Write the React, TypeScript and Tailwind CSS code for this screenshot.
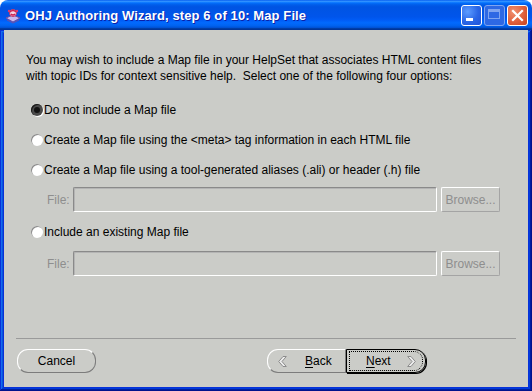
import React from "react";

const font = "font-['Liberation_Sans',Arial,sans-serif]";

function Radio({ checked }: { checked?: boolean }) {
  return checked ? (
    <span className="relative w-[12px] h-[12px] rounded-full bg-[#4a4a4a] shadow-[inset_1px_1px_0_#1a1a1a,1px_1px_0_#ffffff] shrink-0 flex items-center justify-center">
      <span className="w-[6px] h-[6px] rounded-full bg-[#111111]" />
    </span>
  ) : (
    <span className="w-[12px] h-[12px] rounded-full bg-white shadow-[inset_1px_1px_0_#8a8a8a] shrink-0" />
  );
}

function Chevron({ dir }: { dir: "left" | "right" }) {
  return (
    <svg width="9" height="11" viewBox="0 0 9 11">
      <path
        d={
          dir === "left"
            ? "M5 0.5 L0.7 5.5 L5 10.5 L8.3 10.5 L4 5.5 L8.3 0.5 Z"
            : "M4 0.5 L8.3 5.5 L4 10.5 L0.7 10.5 L5 5.5 L0.7 0.5 Z"
        }
        fill="#ececec"
        stroke="#8c8c8c"
        strokeWidth="1"
        strokeLinejoin="round"
      />
    </svg>
  );
}

function AppIcon() {
  return (
    <svg width="16" height="16" viewBox="0 0 16 16">
      <path d="M1 10 L8 7 L15 10 L8 14 Z" fill="#c9b8ee" stroke="#6a4fa8" strokeWidth="1" />
      <path d="M2 12 L8 15 L14 12" fill="none" stroke="#6a4fa8" strokeWidth="1" />
      <circle cx="8" cy="5" r="3.5" fill="#f4d4e4" stroke="#c03060" strokeWidth="1" />
      <path d="M5 4 Q8 1 11 4 M6 6 Q8 8 10 6" fill="none" stroke="#d02050" strokeWidth="1.2" />
      <circle cx="4" cy="3" r="1.2" fill="#e03a6a" />
      <circle cx="12" cy="3" r="1.2" fill="#e03a6a" />
    </svg>
  );
}

function FileRow() {
  return (
    <div className="flex items-center h-[25px] pl-[31px]">
      <span className="text-[12px] text-[#8e8e8e] w-[26px] leading-none">File:</span>
      <div className="w-[364px] h-[25px] rounded-[2px] border border-t-[#8a8a8a] border-l-[#8a8a8a] border-r-white border-b-white shadow-[inset_1px_1px_0_#b4b4b4]" />
      <div className="ml-[4px] w-[59px] h-[25px] rounded-[2px] border border-t-white border-l-white border-r-[#a4a4a4] border-b-[#a4a4a4] flex items-center justify-center text-[12px] text-[#8e8e8e]">
        Browse...
      </div>
    </div>
  );
}

export default function App() {
  return (
    <div className={`w-[532px] h-[391px] flex flex-col rounded-t-[8px] overflow-hidden ${font}`}>
      {/* Title bar */}
      <div className="h-[30px] shrink-0 flex items-center bg-[linear-gradient(180deg,#0058ee_0%,#3593ff_4%,#288eff_6%,#127dff_8%,#036ffc_10%,#0262ee_14%,#0057e5_20%,#0054e3_24%,#0055eb_56%,#005bf5_66%,#026afe_76%,#0062ef_86%,#0052d6_92%,#0040ab_94%,#003092_100%)]">
        <div className="ml-[5px] mt-[1px] w-[16px] h-[16px]">
          <AppIcon />
        </div>
        <span className="ml-[4px] text-white font-bold text-[13px] leading-none tracking-[0.1px] [text-shadow:1px_1px_0_#0a1fa8]">
          OHJ Authoring Wizard, step 6 of 10: Map File
        </span>
        <div className="ml-auto mr-[4px] flex gap-[2px] items-center">
          <div className="relative w-[21px] h-[21px] rounded-[3px] border border-white bg-[radial-gradient(circle_at_30%_30%,#5c9cff_0%,#2a66e6_55%,#1f52d8_100%)]">
            <div className="absolute left-[4px] top-[12px] w-[7px] h-[3px] bg-white" />
          </div>
          <div className="relative w-[21px] h-[21px] rounded-[3px] border border-[#7fa4f0] bg-[#2e68e4]">
            <div className="absolute left-[3px] top-[3px] w-[12px] h-[10px] border border-t-[3px] border-[#7fa4f0]" />
          </div>
          <div className="relative w-[21px] h-[21px] rounded-[3px] border border-white bg-[radial-gradient(circle_at_30%_30%,#f09070_0%,#e0603c_55%,#c8441e_100%)]">
            <svg className="absolute left-[3px] top-[3px]" width="13" height="13" viewBox="0 0 13 13">
              <path d="M2 2 L11 11 M11 2 L2 11" stroke="white" strokeWidth="2.2" strokeLinecap="square" />
            </svg>
          </div>
        </div>
      </div>

      {/* Frame */}
      <div className="flex-1 flex flex-col px-[4px] pb-[4px] bg-[#0831d9] shadow-[inset_-1px_-1px_#00138c,inset_1px_1px_#0831d9,inset_-2px_-2px_#001ea0,inset_2px_2px_#166aee,inset_-3px_-3px_#003bda,inset_3px_3px_#0855dd]">
        <div className="flex-1 flex flex-col bg-[#cbccc8] px-[12px] text-black text-[12px]">
          {/* Form */}
          <div className="flex-1 flex flex-col">
            <p className="pl-[10px] pt-[22px] leading-[16px]">
              You may wish to include a Map file in your HelpSet that associates HTML content files
              <br />
              with topic IDs for context sensitive help.&nbsp; Select one of the following four options:
            </p>
            <div className="mt-[14px] flex items-center h-[24px] pl-[15px] gap-[1px]">
              <Radio checked />
              <span>Do not include a Map file</span>
            </div>
            <div className="mt-[6px] flex items-center h-[24px] pl-[15px] gap-[1px]">
              <Radio />
              <span>Create a Map file using the &lt;meta&gt; tag information in each HTML file</span>
            </div>
            <div className="mt-[6px] flex items-center h-[24px] pl-[15px] gap-[1px]">
              <Radio />
              <span>Create a Map file using a tool-generated aliases (.ali) or header (.h) file</span>
            </div>
            <div className="mt-[5px]">
              <FileRow />
            </div>
            <div className="mt-[8px] flex items-center h-[24px] pl-[15px] gap-[1px]">
              <Radio />
              <span>Include an existing Map file</span>
            </div>
            <div className="mt-[7px]">
              <FileRow />
            </div>
          </div>

          {/* Footer */}
          <div className="h-[1px] bg-[#9a9a9a]" />
          <div className="mt-[10px] mb-[14px] h-[24px] flex items-center">
            <div className="ml-[1px] w-[79px] h-[24px] rounded-[11px] border border-t-white border-l-white border-r-[#7c7c7c] border-b-[#7c7c7c] flex items-center justify-center">
              Cancel
            </div>
            <div className="ml-[171px] w-[79px] h-[24px] rounded-l-[11px] border border-t-white border-l-white border-r-[#7c7c7c] border-b-[#7c7c7c] flex items-center pl-[10px]">
              <Chevron dir="left" />
              <span className="ml-[18px]">
                <span className="underline underline-offset-[2px]">B</span>ack
              </span>
            </div>
            <div className="w-[80px] h-[24px] rounded-r-[11px] border border-black shadow-[1px_1px_0_#000] flex items-center">
              <div className="mx-[2px] flex-1 h-[20px] rounded-r-[9px] border border-dotted border-black flex items-center pl-[16px]">
                <span>
                  <span className="underline underline-offset-[2px]">N</span>ext
                </span>
                <span className="ml-[16px]">
                  <Chevron dir="right" />
                </span>
              </div>
            </div>
          </div>
        </div>
      </div>
    </div>
  );
}
